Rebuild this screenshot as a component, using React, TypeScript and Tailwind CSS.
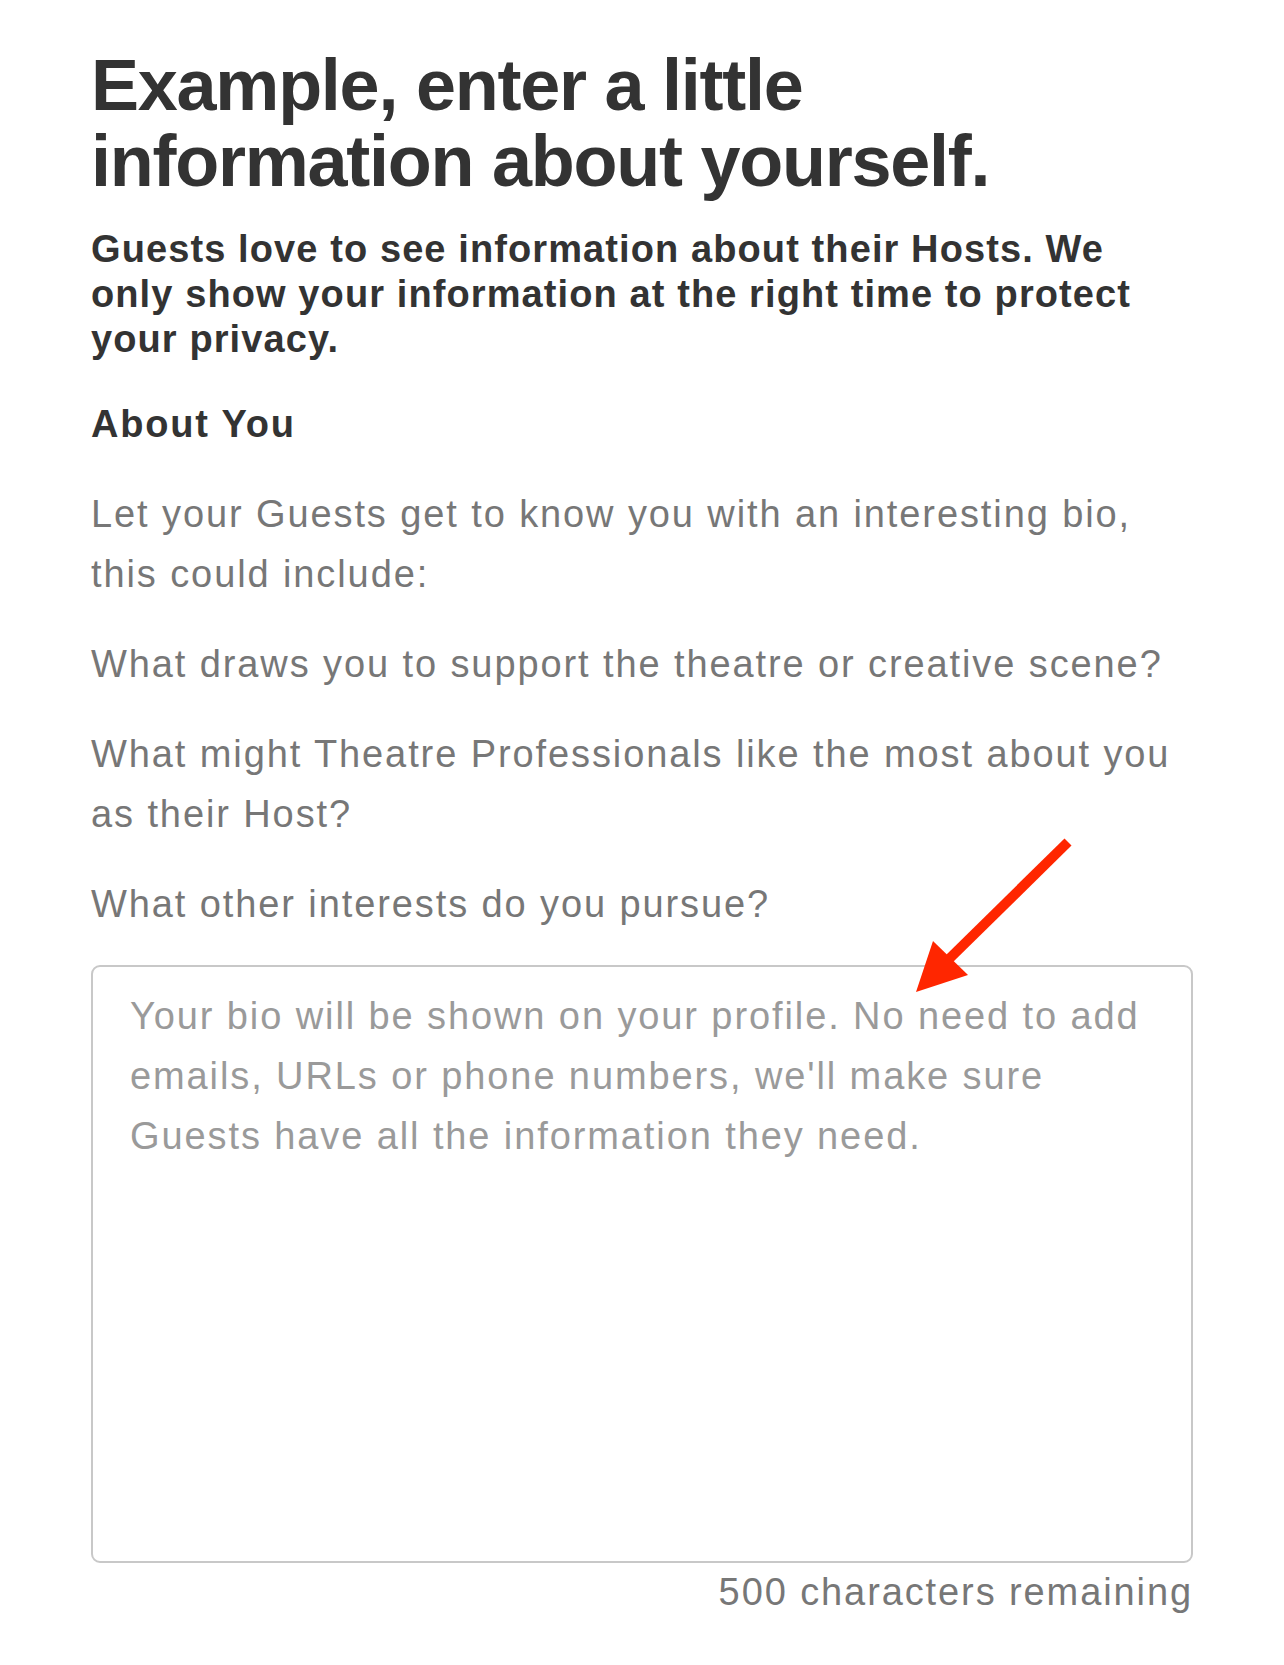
export default function App() {
  return (
    <div className="relative min-h-[1665px] w-full bg-white px-[91px] pt-[47px] font-['Liberation_Sans',Arial,sans-serif]">
      <h1 className="text-[72px] font-bold leading-[76px] tracking-[-1.25px] text-[#333]">
        Example, enter a little
        <br />
        information about yourself.
      </h1>

      <p className="mt-[28px] text-[38px] font-bold leading-[45px] tracking-[1.1px] text-[#333]">
        Guests love to see information about their Hosts. We
        <br />
        only show your information at the right time to protect
        <br />
        your privacy.
      </p>

      <h2 className="mt-[40px] text-[38px] font-bold leading-[45px] tracking-[1.8px] text-[#333]">
        About You
      </h2>

      <div className="mt-[37px] flex flex-col gap-[30px] text-[38px] leading-[60px] tracking-[1.9px] text-[#777]">
        <p>
          Let your Guests get to know you with an interesting bio,
          <br />
          this could include:
        </p>
        <p>What draws you to support the theatre or creative scene?</p>
        <p>
          What might Theatre Professionals like the most about you
          <br />
          as their Host?
        </p>
        <p>What other interests do you pursue?</p>
      </div>

      <textarea
        className="mt-[31px] block h-[598px] w-full resize-none rounded-[9px] border-2 border-[#c8c8c8] bg-white pb-[19px] pl-[37px] pr-[30px] pt-[19px] text-[38px] leading-[60px] tracking-[1.9px] text-[#333] outline-none placeholder:text-[#9a9a9a]"
        placeholder="Your bio will be shown on your profile. No need to add emails, URLs or phone numbers, we'll make sure Guests have all the information they need."
      />

      <p className="mt-[7px] text-right text-[38px] leading-[45px] tracking-[1.9px] text-[#777]">
        500 characters remaining
      </p>

      {/* annotation arrow */}
      <svg
        className="absolute left-[900px] top-[830px]"
        width="180"
        height="170"
        viewBox="0 0 180 170"
      >
        <line x1="168" y1="12" x2="48" y2="130" stroke="#ff2600" strokeWidth="10" />
        <polygon points="16,162 33,111 68,145" fill="#ff2600" />
      </svg>
    </div>
  );
}
